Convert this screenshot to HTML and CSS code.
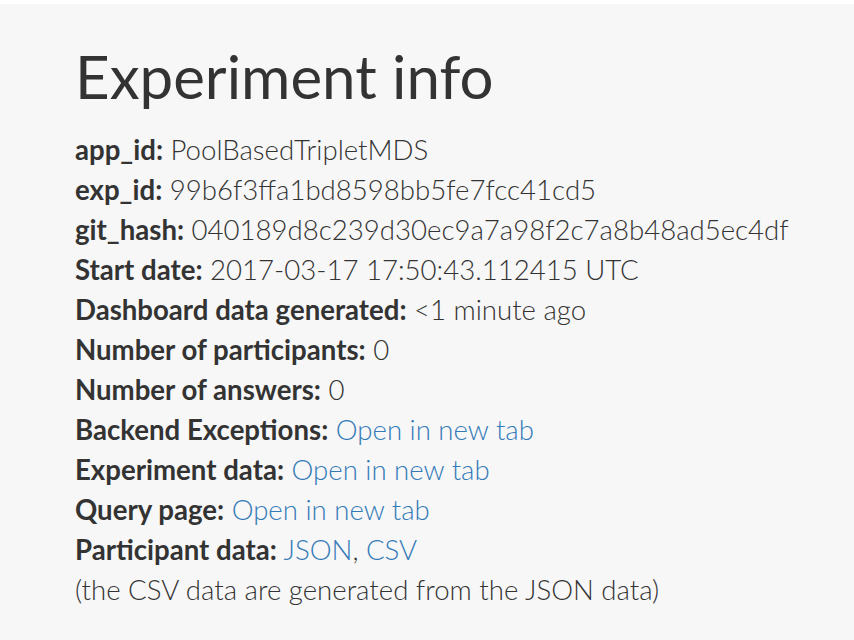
FILE: index.html
```html
<!DOCTYPE html>
<html>
<head>
<meta charset="utf-8">
<link rel="stylesheet" href="styles.css">
</head>
<body>
<div class="jumbotron">
  <h1 class="title">Experiment info</h1>
  <ul class="info">
    <li><b>app_id:</b> PoolBasedTripletMDS</li>
    <li><b>exp_id:</b> 99b6f3ffa1bd8598bb5fe7fcc41cd5</li>
    <li><b>git_hash:</b> 040189d8c239d30ec9a7a98f2c7a8b48ad5ec4df</li>
    <li><b>Start date:</b> 2017-03-17 17:50:43.112415 UTC</li>
    <li><b>Dashboard data generated:</b> &lt;1 minute ago</li>
    <li><b>Number of participants:</b> 0</li>
    <li><b>Number of answers:</b> 0</li>
    <li><b>Backend Exceptions:</b> <a href="#">Open in new tab</a></li>
    <li><b>Experiment data:</b> <a href="#">Open in new tab</a></li>
    <li><b>Query page:</b> <a href="#">Open in new tab</a></li>
    <li><b>Participant data:</b> <a href="#">JSON</a>, <a href="#">CSV</a></li>
    <li>(the CSV data are generated from the JSON data)</li>
  </ul>
</div>
</body>
</html>
```
FILE: styles.css
```css
html, body {
  margin: 0;
  padding: 0;
  background: #ffffff;
}
body {
  padding-top: 4px;
  font-family: Lato, "Open Sans", sans-serif;
  color: #333333;
}
.jumbotron {
  background: #f7f7f7;
  height: 636px;
  box-sizing: border-box;
  padding: 34px 0 0 75px;
}
.title {
  margin: 0 0 16px 0;
  font-size: 60px;
  font-weight: 400;
  line-height: 76px;
}
.info {
  list-style: none;
  margin: 0;
  padding: 0;
  font-size: 27.6px;
  line-height: 40px;
  font-weight: 300;
}
.info b {
  font-weight: 700;
}
.info a {
  color: #337ab7;
  text-decoration: none;
}
```
